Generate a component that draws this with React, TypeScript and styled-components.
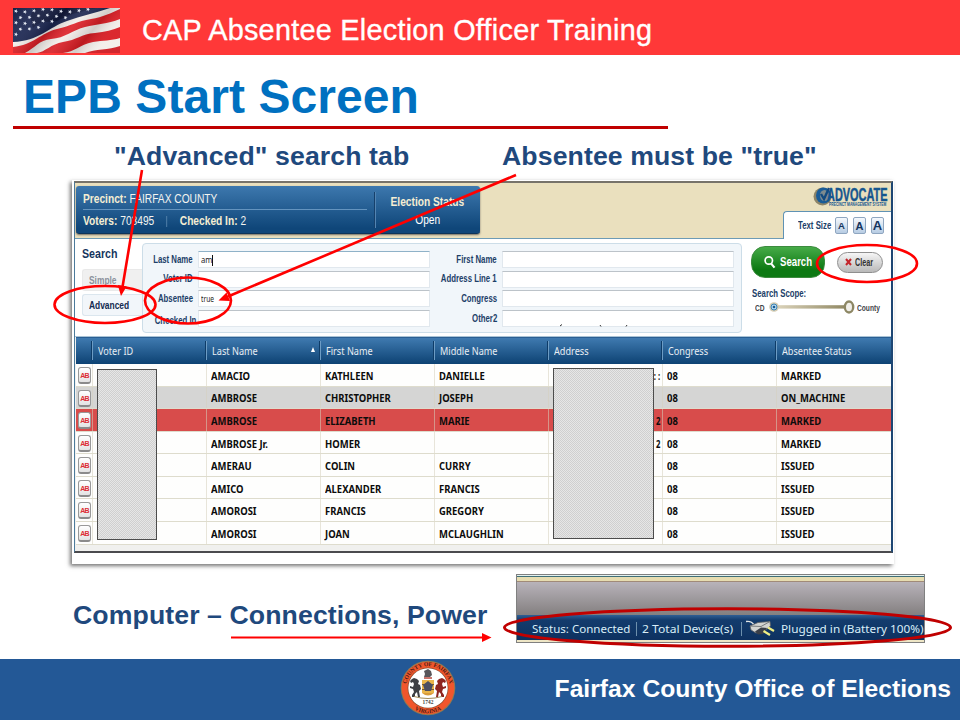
import React from "react";
import styled, { createGlobalStyle } from "styled-components";

const sans = '"Liberation Sans", Arial, sans-serif';
const ui = '"Noto Sans", "Open Sans", sans-serif';

const Global = createGlobalStyle`
  body { margin: 0; background: #fff; }
  * { box-sizing: border-box; }
`;

const Slide = styled.div`
  position: relative;
  width: 960px;
  height: 720px;
  overflow: hidden;
  display: flex;
  flex-direction: column;
  background: #fff;
  font-family: ${sans};
  white-space: nowrap;
`;

const Banner = styled.header`
  flex: none;
  height: 55px;
  padding: 5px 0 0 13px;
  display: flex;
  align-items: center;
  gap: 22px;
  background: #ff3838;
`;

const BannerTitle = styled.div`
  color: #fff;
  font-size: 28.8px;
  letter-spacing: 0.27px;
  -webkit-text-stroke: 0.35px #fff;
`;

const TitleBlock = styled.div`
  flex: none;
  width: 655px;
  height: 74px;
  margin-left: 13px;
  padding: 12px 0 0 10px;
  display: flex;
  align-items: center;
  border-bottom: 3px solid #c00000;
`;

const Title = styled.h1`
  margin: 0;
  font-size: 48px;
  font-weight: 700;
  line-height: 48px;
  letter-spacing: 0.07px;
  color: #0070c0;
`;

const Captions = styled.div`
  flex: none;
  height: 51px;
  padding: 3px 0 0 114px;
  display: grid;
  grid-template-columns: 388px auto;
  align-items: center;
`;

const Caption = styled.div`
  font-size: 26.67px;
  font-weight: 700;
  letter-spacing: 0.09px;
  color: #1f497d;
`;

/* White sheet with the soft shadow to the left and below */
const Sheet = styled.div`
  flex: none;
  width: 822px;
  height: 384px;
  margin-left: 72px;
  padding: 1px 1px 11px 2px;
  background: #fff;
  box-shadow: -2px 2px 4px rgba(0, 0, 0, 0.55);
`;

const Screen = styled.div`
  position: relative;
  height: 372px;
  border: solid;
  border-width: 2px 2px 2px 1px;
  border-color: #77736a #1d4673 #4a4a4e #4c7b9c;
  display: flex;
  flex-direction: column;
  background: #f0f0ee;
`;

const Squeeze = styled.span<{ $k: number; $right?: boolean; $mid?: boolean }>`
  display: block;
  transform: scaleX(${(p) => p.$k});
  transform-origin: ${(p) => (p.$right ? "right" : p.$mid ? "center" : "left")};
`;

const TopBar = styled.div`
  flex: none;
  height: 56px;
  display: flex;
  justify-content: space-between;
  padding: 3px 0 0 1px;
  background: #eae0be;
  border-bottom: 1px solid #6d9bb5;
`;

const StatusPanel = styled.div`
  width: 404px;
  height: 48px;
  padding: 2px 0 3px 7px;
  display: grid;
  grid-template-columns: 284px 13px 92px;
  background: linear-gradient(#3d78ae, #0f4679 90%);
  border-radius: 3px;
  border-bottom: 1px solid #0d3459;
  box-shadow: 0 1px 2px rgba(60, 60, 60, 0.7);
  color: #fff;
`;

const PanelLines = styled.div`
  display: grid;
  grid-template-rows: 22px 21px;
`;

const PanelLine = styled.div<{ $ruled?: boolean }>`
  display: flex;
  align-items: center;
  padding-top: 1px;
  font-size: 12px;
  color: #f4f4f0;
  border-bottom: ${(p) => (p.$ruled ? "1px solid #6494bf" : "0")};
  b { color: #f5eed3; }
`;

const Gap = styled.span`
  display: inline-block;
  width: 1px;
  height: 11px;
  margin: 0 15px 0 14px;
  background: #5b88b0;
  vertical-align: -2px;
`;

const PanelDivider = styled.div`
  margin: 4px 0 3px 7px;
  border-left: 1px solid #16406b;
  box-shadow: inset 1px 0 #5384b2;
`;

const ElectionStatus = styled.div`
  display: flex;
  flex-direction: column;
  align-items: center;
  justify-content: center;
  gap: 4px;
  padding: 2px 0 0 3px;
  font-size: 12px;
  line-height: 14px;
  b { color: #f5eed3; }
`;

const Brand = styled.div`
  display: flex;
  flex-direction: column;
  align-items: flex-end;
`;

const LogoRow = styled.div`
  height: 25px;
  display: flex;
  padding-right: 3px;
`;

const LogoWords = styled.div`
  width: 61px;
  margin-left: -4px;
  padding-top: 1px;
  color: #15568f;
`;

const LogoName = styled.div`
  height: 14px;
  font-size: 18.5px;
  line-height: 15px;
  font-weight: 700;
  -webkit-text-stroke: 0.5px #15568f;
`;

const LogoTag = styled.div`
  padding-left: 2px;
  font-size: 5.6px;
  line-height: 6px;
  font-weight: 700;
`;

const TextSizeTab = styled.div`
  width: 108px;
  height: 28px;
  margin-bottom: -1px;
  padding: 0 8px 0 14px;
  display: flex;
  align-items: center;
  background: #fff;
  border: solid #5f92b4;
  border-width: 1px 0 0 1px;
  border-top-left-radius: 4px;
`;

const SmallLabel = styled.div`
  width: 32px;
  font-size: 10px;
  font-weight: 700;
  color: #1c4068;
`;

const SizeButton = styled.div<{ $size: number }>`
  flex: none;
  width: 13px;
  height: 17px;
  margin-left: 5px;
  display: flex;
  align-items: center;
  justify-content: center;
  font-size: ${(p) => p.$size}px;
  font-weight: 700;
  color: #14345d;
  background: linear-gradient(#f5f9fd, #b7cce3);
  border: 1px solid #8fa6c0;
  border-radius: 2px;
`;

const SearchArea = styled.div`
  flex: none;
  height: 98px;
  padding: 4px 0 0 7px;
  display: grid;
  grid-template-columns: 60px 600px 1fr;
  background: #fff;
  border-bottom: 1px solid #a9c3d6;
`;

const SideTabs = styled.div`
  padding-top: 3px;
  display: flex;
  flex-direction: column;
  gap: 3px;
`;

const SideHeading = styled.div`
  height: 20px;
  font-size: 13px;
  line-height: 15px;
  font-weight: 700;
  color: #14345d;
`;

const SideTab = styled.div<{ $active?: boolean }>`
  height: 22px;
  padding-left: 6px;
  display: flex;
  align-items: center;
  font-size: 10.5px;
  font-weight: 700;
  color: ${(p) => (p.$active ? "#122b50" : "#8b929c")};
  background: ${(p) => (p.$active ? "#f2f6fa" : "#f0f0f0")};
  border: 1px solid ${(p) => (p.$active ? "#dbe6ee" : "#e9e9e9")};
  border-right: 0;
  border-radius: 3px 0 0 3px;
`;

const Form = styled.div`
  height: 90px;
  padding: 7px 8px 0 0;
  display: grid;
  grid-template-columns: 50px 235px 65px 235px;
  grid-template-rows: repeat(4, 17px);
  row-gap: 2.7px;
  column-gap: 2px;
  background: #f1f6fa;
  border: 1px solid #ccdde8;
  border-radius: 4px;
`;

const FieldLabel = styled.div<{ $low?: boolean }>`
  display: flex;
  align-items: center;
  justify-content: flex-end;
  margin-right: ${(p) => (p.$low ? "-3px" : "0")};
  padding-top: ${(p) => (p.$low ? "4px" : "0")};
  font-size: 10px;
  line-height: 12px;
  font-weight: 700;
  color: #1c4068;
`;

const Field = styled.div<{ $focus?: boolean }>`
  margin-left: 3px;
  padding: 1px 0 0 2px;
  display: flex;
  align-items: center;
  font-family: ${ui};
  font-size: 8.5px;
  line-height: 10px;
  color: #222;
  background: #fff;
  border: 1px solid #e1e8ee;
  border-top: 1px solid ${(p) => (p.$focus ? "#8fb2c8" : "#bcc3c9")};
`;

const Caret = styled.span`
  width: 1px;
  height: 11px;
  margin-left: -2px;
  background: #111;
`;

const Actions = styled.div`
  padding: 2px 0 0 9px;
`;

const Buttons = styled.div`
  height: 34px;
  display: flex;
  align-items: center;
  gap: 12px;
`;

const SearchButton = styled.div`
  width: 74px;
  height: 32px;
  padding-left: 12px;
  display: flex;
  align-items: center;
  gap: 4px;
  border-radius: 14px;
  background: linear-gradient(#46ab48, #0d7913 75%);
  border: 1px solid #3c8b3e;
  color: #fff;
  font-size: 12.5px;
  font-weight: 700;
`;

const ClearButton = styled.div`
  width: 46px;
  height: 21px;
  padding-left: 7px;
  display: flex;
  align-items: center;
  gap: 3px;
  border-radius: 11px;
  background: linear-gradient(#f6f6f6, #b9b9b9);
  border: 1px solid #8f8f8f;
  color: #333;
  font-size: 10px;
  font-weight: 700;
`;

const ScopeTitle = styled.div`
  height: 22px;
  padding: 9px 0 0 1px;
  font-size: 10px;
  line-height: 12px;
  font-weight: 700;
  color: #1c4068;
`;

const Scope = styled.div`
  height: 16px;
  margin-top: -2px;
  padding-left: 4px;
  display: grid;
  grid-template-columns: 13px 89px 30px;
  align-items: center;
  font-size: 9.5px;
  font-weight: 700;
  color: #3f4348;
`;

const columns = "16px 114px 114px 114px 114px 114px 114px 1fr";

const HeadRow = styled.div`
  flex: none;
  height: 27px;
  margin-left: 1px;
  display: grid;
  grid-template-columns: ${columns};
  background: linear-gradient(#3f7ab0, #0d4273);
  border-top: 1px solid #2a5f93;
  color: #e8eef4;
  font-family: ${ui};
  font-size: 11px;
`;

const HeadCell = styled.div`
  position: relative;
  margin: 3px 0 4px;
  padding: 0 0 1px 5px;
  display: flex;
  align-items: center;
  border-left: 1px solid #6d9cc4;
  box-shadow: -1px 0 #0e3c68;
  &:first-child { border: 0; box-shadow: none; }
`;

const SortMark = styled.span`
  position: absolute;
  right: 5px;
  top: 6px;
  border: solid transparent;
  border-width: 0 2.5px 5px;
  border-bottom-color: #fff;
`;

const Rows = styled.div`
  flex: none;
  height: 180.6px;
  margin-left: 1px;
  display: grid;
  grid-template-rows: repeat(8, 1fr);
`;

const Row = styled.div<{ $tone?: "grey" | "red" }>`
  display: grid;
  grid-template-columns: ${columns};
  background: ${(p) => (p.$tone === "grey" ? "#d5d5d4" : p.$tone === "red" ? "#d84c4b" : "#fefefd")};
  border-bottom: 1px solid #dedccd;
  color: #0c0c0c;
  font-family: ${ui};
  font-size: 11px;
  font-weight: 700;
`;

const Cell = styled.div<{ $end?: boolean }>`
  padding: ${(p) => (p.$end ? "2px 2px 0 0" : "2px 0 0 4px")};
  display: flex;
  align-items: center;
  justify-content: ${(p) => (p.$end ? "flex-end" : "flex-start")};
  line-height: 14px;
  border-left: 1px solid rgba(214, 208, 190, 0.55);
`;

const Badge = styled.div`
  width: 13px;
  height: 17px;
  margin: 3px 0 0 2px;
  padding-top: 1px;
  display: flex;
  align-items: center;
  justify-content: center;
  font-family: ${sans};
  font-size: 7px;
  font-weight: 700;
  letter-spacing: -0.7px;
  color: #dd2f35;
  background: linear-gradient(#fff, #e3e3e3);
  border: 1px solid #999;
  border-bottom: 2px solid #8b8b8b;
  border-radius: 3px;
`;

/* Hatched cover laid over private table cells */
const Redaction = styled.div<{ $x: number; $y: number; $w: number }>`
  position: absolute;
  left: ${(p) => p.$x}px;
  top: ${(p) => p.$y}px;
  width: ${(p) => p.$w}px;
  height: 171px;
  border: 1px solid #4c4c4c;
  background: repeating-conic-gradient(#cfcfcf 0 25%, #e6e6e6 0 50%) 0 0 / 2px 2px;
`;

const LowerBlock = styled.div`
  flex: none;
  height: 95px;
  padding: 10px 0 0 73px;
  display: grid;
  grid-template-columns: 443px 409px;
`;

const LowerCaption = styled(Caption)`
  height: 82px;
  display: flex;
  align-items: center;
`;

const DeviceBox = styled.div`
  height: 69px;
  display: flex;
  flex-direction: column;
  border: 1px solid #808080;
  background: linear-gradient(#e4f1f0 1px, #3f6f78 1px 2px, #e6dcb0 2px 6px, #a08a78 6px 7px, #b8b3ba 7px, #827e7e 41px);
`;

const DeviceBar = styled.div`
  height: 25px;
  margin-top: 40px;
  padding: 2px 0 0 15px;
  display: grid;
  grid-template-columns: 104px 6px 99px 5px 35px auto;
  align-items: center;
  background: linear-gradient(#2f5f95, #133c6d 5px, #0d3160);
  color: #d9eef8;
  font-family: ${ui};
  font-size: 11px;
`;

const DeviceFoot = styled.div`
  flex: 1;
  background: #eee6c6;
`;

const Bar = styled.span`
  width: 1px;
  height: 14px;
  background: #6d90ad;
`;

const Footer = styled.footer`
  flex: none;
  height: 61px;
  padding: 0 9px 3px 399.5px;
  display: flex;
  align-items: center;
  justify-content: space-between;
  background: #235896;
  color: #fff;
`;

const FooterText = styled.div`
  font-size: 24.7px;
  font-weight: 700;
  padding-top: 2px;
`;

const Markup = styled.svg`
  position: absolute;
  left: 0;
  top: 0;
  pointer-events: none;
`;

const stars = Array.from({ length: 45 }, (_, i) => {
  const row = Math.floor(i / 9);
  const x = 3 + (i % 9) * 9 + (row % 2) * 4.5;
  return { x, y: 2.5 + row * 5.8 + Math.sin(x / 7) * 1.3 };
}).filter((s) => s.y < 28 - s.x * 0.34);

const Flag = () => (
  <svg width="107" height="45" viewBox="0 0 107 45">
    <defs>
      <linearGradient id="folds" x1="0" y1="0" x2="1" y2=".35">
        <stop offset="0" stopColor="#000" stopOpacity=".15" />
        <stop offset=".25" stopColor="#fff" stopOpacity=".08" />
        <stop offset=".45" stopColor="#000" stopOpacity=".16" />
        <stop offset=".62" stopColor="#fff" stopOpacity=".1" />
        <stop offset=".82" stopColor="#000" stopOpacity=".14" />
        <stop offset="1" stopColor="#fff" stopOpacity=".05" />
      </linearGradient>
    </defs>
    <rect width="107" height="45" fill="#f3eeea" />
    <path d="M0 0H97C82 5 68 8 54 13C36 19 26 33 0 34Z" fill="#1a2550" />
    <path d="M22 0H84C66 4 56 6 46 12C36 16 30 10 20 20C18 12 16 6 22 0Z" fill="#0b1230" opacity=".6" />
    <path d="M0 39C20 37 28 25 44 21C58 18 64 13 78 11C90 9 98 5 107 1V11C94 16 84 16 72 19C60 22 52 30 38 31C26 32 22 40 12 45H0Z" fill="#dd1f26" />
    <path d="M24 45C32 44 38 36 50 34C64 32 68 26 82 25C92 24 100 22 107 19V30C98 33 90 32 80 34C66 37 62 44 50 45Z" fill="#d91d24" />
    <path d="M72 45C82 41 96 42 107 38V45Z" fill="#cf1c23" />
    <rect width="107" height="45" fill="url(#folds)" />
    {stars.map((s, i) => (
      <path key={i} transform={`translate(${s.x} ${s.y}) rotate(20)`} d="M0-2L.6-.6 2-.5 .9 .5 1.300 1.800 0 1-1.300 1.800-.9 .5-2-.5-.6-.6Z" fill="#e3e8f2" />
    ))}
  </svg>
);

const LogoMark = () => (
  <svg width="18" height="20" viewBox="0 0 18 20">
    <ellipse cx="9.500" cy="10.500" rx="9" ry="9" fill="#8c8468" />
    <ellipse cx="10.500" cy="9.500" rx="7.500" ry="8" fill="#1a5c97" />
    <ellipse cx="11.500" cy="9.500" rx="4.500" ry="5.500" fill="#7e8b8e" />
    <path d="M8 8l3 5 5-11" fill="none" stroke="#124a80" strokeWidth="2.4" />
  </svg>
);

const Slider = () => (
  <svg width="89" height="14" viewBox="0 0 89 14">
    <defs>
      <linearGradient id="track"><stop offset="0" stopColor="#ddd5bd" /><stop offset="1" stopColor="#8d855f" /></linearGradient>
    </defs>
    <rect x="7" y="5.200" width="74" height="3.400" fill="url(#track)" />
    <circle cx="6" cy="7" r="4.800" fill="#d6ccb2" />
    <circle cx="6" cy="7" r="3" fill="#b9daf0" stroke="#3c85b8" strokeWidth="1" />
    <circle cx="6" cy="7" r="1.300" fill="#175c93" />
    <ellipse cx="81" cy="7" rx="4.200" ry="5.500" fill="#f1efe9" stroke="#8d8764" strokeWidth="2.4" />
  </svg>
);

const Plug = () => (
  <svg width="31" height="17" viewBox="0 0 31 17">
    <path d="M0 1.500C4 1 6 1.500 8 5" fill="none" stroke="#e3e7e7" strokeWidth="1.5" />
    <path d="M4 6L12 2.500L24 1.500L24.500 6L17 12L10 13L5 10Z" fill="#d3d4d1" stroke="#5a5e62" strokeWidth=".8" />
    <path d="M4 6L15 6.500L24 1.500" fill="none" stroke="#777b7d" strokeWidth="1" />
    <path d="M9 11.500L15 7.500L21 8L17 14L12 14.500Z" fill="#3a3f48" />
    <path d="M22 7.500l6 3.500M17.500 11l6.500 4" stroke="#f0ee84" strokeWidth="2.2" />
  </svg>
);

const Horse = ({ fill }: { fill: string }) => (
  <path fill={fill} d="M5 0L7 1 9 3 8 5 6 4 5 6 6 9 9 8 9 10 6 11 5 14 7 17 7 19 4 19 4 16 2 14 1 19-1 19 0 13-2 11-1 7 1 6 0 3 2 1Z" />
);

const Seal = () => (
  <svg width="56" height="56" viewBox="-28 -28 56 56">
    <defs>
      <path id="arcTop" d="M-21.300 5A21.900 21.900 0 1 1 21.300 5" />
      <path id="arcBottom" d="M-19.500 16A25.200 25.200 0 0 0 19.500 16" />
    </defs>
    <circle r="27.300" fill="#8f7a52" />
    <circle r="26.300" fill="#f0562c" />
    <circle r="20.400" fill="#8a4a2a" />
    <circle r="19.700" fill="#fff" />
    <g fontFamily="Liberation Serif, serif" fontWeight="700" fill="#4b1c14">
      <text fontSize="5.800" textAnchor="middle"><textPath href="#arcTop" startOffset="50%">COUNTY OF FAIRFAX</textPath></text>
      <text fontSize="5.800" textAnchor="middle"><textPath href="#arcBottom" startOffset="50%">VIRGINIA</textPath></text>
      <text y="15.600" fontSize="5.400" textAnchor="middle" fill="#444">1742</text>
    </g>
    <path d="M-4-17L0-19 3-17 4-13 2-11H-4L-3-14Z" fill="#58565a" />
    <path d="M-4-10H4" stroke="#b33a2d" strokeWidth="1.4" />
    <rect x="-6" y="-8" width="12" height="13" fill="#e9b54a" />
    <path d="M-6-3.500H6M-6 1.500H6" stroke="#7a5a2c" strokeWidth="1" />
    <path d="M-5-3L0-7 5-3 3 3-3 3Z" fill="#4a4e62" />
    <path d="M-6 5Q0 10 6 5Z" fill="#d99c3a" />
    <g transform="translate(-9 -10) scale(-1 1)"><Horse fill="#3e4044" /></g>
    <g transform="translate(9 -10)"><Horse fill="#8e2620" /></g>
    <path d="M-14 8.500Q0 12.500 14 8.500" fill="none" stroke="#a08a58" strokeWidth="1" />
  </svg>
);

const Label = ({ children, low }: { children: string; low?: boolean }) => (
  <FieldLabel $low={low}><Squeeze $k={0.78} $right>{children}</Squeeze></FieldLabel>
);

const heads = ["", "Voter ID", "Last Name", "First Name", "Middle Name", "Address", "Congress", "Absentee Status"];

type Voter = { last: string; first: string; middle: string; addr?: string; status: string; tone?: "grey" | "red" };
const voters: Voter[] = [
  { last: "AMACIO", first: "KATHLEEN", middle: "DANIELLE", addr: ": :", status: "MARKED" },
  { last: "AMBROSE", first: "CHRISTOPHER", middle: "JOSEPH", status: "ON_MACHINE", tone: "grey" },
  { last: "AMBROSE", first: "ELIZABETH", middle: "MARIE", addr: "2", status: "MARKED", tone: "red" },
  { last: "AMBROSE Jr.", first: "HOMER", middle: "", addr: "2", status: "MARKED" },
  { last: "AMERAU", first: "COLIN", middle: "CURRY", status: "ISSUED" },
  { last: "AMICO", first: "ALEXANDER", middle: "FRANCIS", status: "ISSUED" },
  { last: "AMOROSI", first: "FRANCIS", middle: "GREGORY", status: "ISSUED" },
  { last: "AMOROSI", first: "JOAN", middle: "MCLAUGHLIN", status: "ISSUED" },
];

const VoterRow = ({ v }: { v: Voter }) => (
  <Row $tone={v.tone}>
    <Badge>AB</Badge>
    <Cell />
    <Cell><Squeeze $k={0.86}>{v.last}</Squeeze></Cell>
    <Cell><Squeeze $k={0.86}>{v.first}</Squeeze></Cell>
    <Cell><Squeeze $k={0.86}>{v.middle}</Squeeze></Cell>
    <Cell $end><Squeeze $k={0.7} $right>{v.addr}</Squeeze></Cell>
    <Cell><Squeeze $k={0.86}>08</Squeeze></Cell>
    <Cell><Squeeze $k={0.86}>{v.status}</Squeeze></Cell>
  </Row>
);

export default function App() {
  return (
    <Slide>
      <Global />
      <Banner>
        <Flag />
        <BannerTitle>CAP Absentee Election Officer Training</BannerTitle>
      </Banner>
      <TitleBlock><Title>EPB Start Screen</Title></TitleBlock>
      <Captions>
        <Caption>"Advanced" search tab</Caption>
        <Caption>Absentee must be "true"</Caption>
      </Captions>

      <Sheet>
        <Screen>
          <TopBar>
            <StatusPanel>
              <PanelLines>
                <PanelLine $ruled><Squeeze $k={0.85}><b>Precinct:</b> FAIRFAX COUNTY</Squeeze></PanelLine>
                <PanelLine><Squeeze $k={0.85}><b>Voters:</b> 703495<Gap /><b>Checked In:</b> 2</Squeeze></PanelLine>
              </PanelLines>
              <PanelDivider />
              <ElectionStatus>
                <Squeeze $k={0.85} $mid><b>Election Status</b></Squeeze>
                <Squeeze $k={0.85} $mid>Open</Squeeze>
              </ElectionStatus>
            </StatusPanel>
            <Brand>
              <LogoRow>
                <LogoMark />
                <LogoWords>
                  <LogoName><Squeeze $k={0.59}>ADVOCATE</Squeeze></LogoName>
                  <LogoTag><Squeeze $k={0.6}>PRECINCT MANAGEMENT SYSTEM</Squeeze></LogoTag>
                </LogoWords>
              </LogoRow>
              <TextSizeTab>
                <SmallLabel><Squeeze $k={0.78}>Text Size</Squeeze></SmallLabel>
                <SizeButton $size={9.5}>A</SizeButton>
                <SizeButton $size={11}>A</SizeButton>
                <SizeButton $size={13}>A</SizeButton>
              </TextSizeTab>
            </Brand>
          </TopBar>

          <SearchArea>
            <SideTabs>
              <SideHeading><Squeeze $k={0.82}>Search</Squeeze></SideHeading>
              <SideTab><Squeeze $k={0.8}>Simple</Squeeze></SideTab>
              <SideTab $active><Squeeze $k={0.8}>Advanced</Squeeze></SideTab>
            </SideTabs>
            <Form>
              <Label>Last Name</Label>
              <Field $focus><Squeeze $k={0.9}>am</Squeeze><Caret /></Field>
              <Label>First Name</Label>
              <Field />
              <Label>Voter ID</Label>
              <Field />
              <Label>Address Line 1</Label>
              <Field />
              <Label>Absentee</Label>
              <Field><Squeeze $k={0.78}>true</Squeeze></Field>
              <Label>Congress</Label>
              <Field />
              <Label low>Checked In</Label>
              <Field />
              <Label>Other2</Label>
              <Field />
            </Form>
            <Actions>
              <Buttons>
                <SearchButton>
                  <svg width="12" height="14" viewBox="0 0 12 14">
                    <circle cx="4.800" cy="5.500" r="3.700" fill="none" stroke="#fff" strokeWidth="1.7" />
                    <path d="M7.200 8.600L10.500 12.600" stroke="#fff" strokeWidth="2.2" />
                  </svg>
                  <Squeeze $k={0.77}>Search</Squeeze>
                </SearchButton>
                <ClearButton>
                  <svg width="7" height="8" viewBox="0 0 7 8">
                    <path d="M1 1L6 7M6 1L1 7" stroke="#c3262c" strokeWidth="2" />
                  </svg>
                  <Squeeze $k={0.72}>Clear</Squeeze>
                </ClearButton>
              </Buttons>
              <ScopeTitle><Squeeze $k={0.78}>Search Scope:</Squeeze></ScopeTitle>
              <Scope>
                <Squeeze $k={0.7}>CD</Squeeze>
                <Slider />
                <Squeeze $k={0.7}>County</Squeeze>
              </Scope>
            </Actions>
          </SearchArea>

          <HeadRow>
            {heads.map((h) => (
              <HeadCell key={h}>
                <Squeeze $k={0.83}>{h}</Squeeze>
                {h === "Last Name" && <SortMark />}
              </HeadCell>
            ))}
          </HeadRow>
          <Rows>
            {voters.map((v, i) => <VoterRow key={i} v={v} />)}
          </Rows>
          <Redaction $x={22} $y={186} $w={60} />
          <Redaction $x={478} $y={185} $w={101} />
        </Screen>
      </Sheet>

      <LowerBlock>
        <LowerCaption>Computer – Connections, Power</LowerCaption>
        <DeviceBox>
          <DeviceBar>
            <Squeeze $k={1.05}>Status: Connected</Squeeze>
            <Bar />
            <Squeeze $k={1.1}>2 Total Device(s)</Squeeze>
            <Bar />
            <Plug />
            <Squeeze $k={1.07}>Plugged in (Battery 100%)</Squeeze>
          </DeviceBar>
          <DeviceFoot />
        </DeviceBox>
      </LowerBlock>

      <Footer>
        <Seal />
        <FooterText>Fairfax County Office of Elections</FooterText>
      </Footer>

      <Markup width="960" height="720" viewBox="0 0 960 720" fill="none">
        <path d="M560 326l2-1.500M600 325l1 1.500M627 325l-1 1.500" stroke="#333" />
        <g stroke="#f00" strokeWidth="2.6">
          <ellipse cx="105" cy="304.500" rx="50.500" ry="18.500" />
          <ellipse cx="188" cy="300.500" rx="43" ry="23" />
          <ellipse cx="867" cy="263.500" rx="50" ry="18.500" />
          <path d="M142 170L122.500 287M516 175L228 296.500" />
          <path d="M231 637.500H484" strokeWidth="2" />
        </g>
        <path d="M121 296L117.800 285L126.600 286.500ZM218.500 300.500L226.500 292.600L230 301ZM491.500 637.500L482 633V642Z" fill="#f00" />
        <ellipse cx="727.500" cy="627.500" rx="223" ry="18.800" stroke="#c00000" strokeWidth="3" />
      </Markup>
    </Slide>
  );
}
